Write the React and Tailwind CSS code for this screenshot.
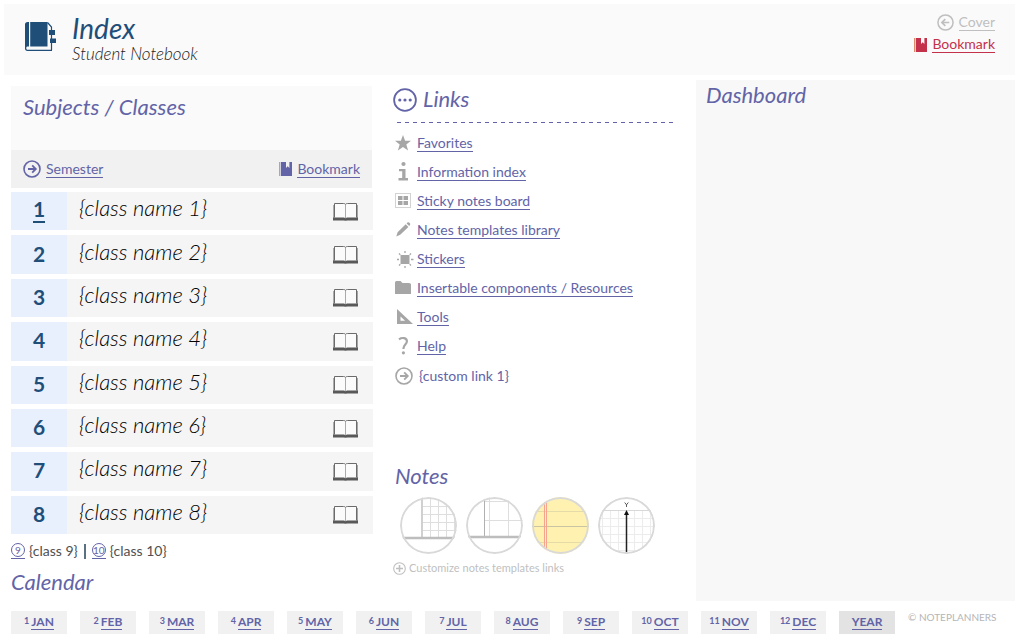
const HAND = "font-['Ink_Free','Lato',sans-serif] italic";

const LINK = "border-b border-current leading-4";

function ArrowCircle({ left = false, className = "" }) {
  return (
    <svg viewBox="0 0 18 18" fill="none" stroke="currentColor" className={className} aria-hidden="true">
      <circle cx="9" cy="9" r="8" strokeWidth="1.6" />
      {left ? (
        <path d="M13 9H5.5M8.8 5.4 5.2 9l3.6 3.6" strokeWidth="1.8" />
      ) : (
        <path d="M5 9h7.5M9.2 5.4 12.8 9l-3.6 3.6" strokeWidth="1.8" />
      )}
    </svg>
  );
}

function BookmarkIcon({ stripe }) {
  return (
    <svg viewBox="0 0 13 14" className="h-[14px] w-[13px]" aria-hidden="true">
      <path d="M0 0h1.4v14H0z" fill={stripe} />
      <path d="M2 0h5v6l1.7-1.700L10.400 6V0H13v14H2z" fill="currentColor" />
    </svg>
  );
}

function NotebookIcon() {
  return (
    <svg viewBox="0 0 32 32" className="h-8 w-8 text-[#1f4e79]" fill="currentColor" aria-hidden="true">
      <path d="M6.200 2H23.500v24.500H6.200z" />
      <path d="M5 2v24.500H3.800c-.9 0-1.500.4-1.500 1.400v.6c0 .9.600 1.300 1.500 1.300H28V31H3.500C1.900 31 1 30 1 28.500V4.500C1 2.900 2 2 3.600 2z" />
      <path d="M23.500 2.500l4 4.500v23" fill="none" stroke="currentColor" strokeWidth="1.200" />
      <path d="M25 10h6v5h-6zM26 18.500h6V23h-6z" />
    </svg>
  );
}

function OpenBook() {
  return (
    <svg viewBox="0 0 25 19" className="h-[19px] w-[25px]" aria-hidden="true">
      <path d="M1.500 15.500V1.500h9c1.200 0 2 .4 2 1.200 0-.8.800-1.200 2-1.200h9v14" fill="#fbfbfb" stroke="#6b6b6b" />
      <path d="M.5 3v13" stroke="#b9a99a" />
      <path d="M24.500 3v13" stroke="#9aa6b9" />
      <path d="M0 15.500h11l1.500.8 1.500-.8h11v3H14.500l-2 .3-2-.3H0z" fill="#595959" />
      <path d="M12.500 2.500V16" stroke="#8fb5b8" />
    </svg>
  );
}

const icons = {
  star: <path d="M8 0l2.100 5.800h5.900l-4.700 3.700 1.800 6L8 12l-5.100 3.500 1.800-6L0 5.800h5.900z" />,
  info: (
    <>
      <circle cx="8.500" cy="0" r="2.100" />
      <path d="M4 5h6.500v9H13v2.500H3.500V14h3.700V7.300H4z" />
    </>
  ),
  board: (
    <>
      <rect x=".5" y=".5" width="15" height="14" fill="none" stroke="currentColor" strokeDasharray="1 1" />
      <path d="M3 3h4.500v4H3zM8.500 3H13v4H8.500zM3 8h4.500v4H3zM8.500 8H13v4H8.500z" />
    </>
  ),
  pencil: <path d="M10.700 2.300l2.700 2.600-8.200 7.900-3.900 1.600 1.300-4.200zM11.600 1.400l.9-.9c1.200-1 3.600 1 2.500 2.600l-.8.900z" />,
  sticker: (
    <>
      <path d="M5.500 4h9v9h-9z" />
      <path d="M10 0v2M10 15v2M2 8.500h2M16 8.500h2.500M4 2.500l1.300 1.300M16 2.500l-1.300 1.300M4 14.500l1.300-1.300M16 14.500l-1.300-1.300" stroke="currentColor" strokeWidth="1.300" />
    </>
  ),
  folder: <path d="M0 2.500Q0 1 1.500 1h4l2 2H14q2 0 2 1.500V14H0z" />,
  tools: <path fillRule="evenodd" d="M2 0l16 15H2zM5.500 7.500v4.300h4.600z" />,
  help: (
    <>
      <path d="M4 1.300C7-.8 12-.4 11.900 3.300 11.800 6.700 8.400 6.600 8.400 11" fill="none" stroke="currentColor" strokeWidth="2.200" />
      <circle cx="8.400" cy="14.800" r="1.600" />
    </>
  ),
};

const links = [
  ["star", "Favorites"],
  ["info", "Information index"],
  ["board", "Sticky notes board"],
  ["pencil", "Notes templates library"],
  ["sticker", "Stickers"],
  ["folder", "Insertable components / Resources"],
  ["tools", "Tools"],
  ["help", "Help"],
];

const templates = [
  {
    name: "Grid paper",
    art: (
      <>
        <path d="M30.500 0v41M38.500 0v41M46.500 0v41M54.500 0v41M23 9.500h34M23 17.500h34M23 25.500h34M23 33.500h34" stroke="#dedede" />
        <path d="M22 0v41" stroke="#d0d0d0" strokeWidth="2" />
        <path d="M0 41h57" stroke="#bdbdbd" strokeWidth="2.500" />
      </>
    ),
  },
  {
    name: "Column paper",
    art: (
      <>
        <path d="M23.500 0v39M42.500 0v39M19 4.500h38M19 23.500h38" stroke="#dedede" />
        <path d="M18.500 0v39" stroke="#b0b0b0" />
        <path d="M0 40h57" stroke="#bdbdbd" strokeWidth="2.500" />
      </>
    ),
  },
  {
    name: "Legal pad",
    art: (
      <>
        <path d="M0 0h57v57H0z" fill="#fff2b0" />
        <path d="M0 14.500h57M0 45.500h57" stroke="#e4dba9" />
        <path d="M0 29.500h57" stroke="#c9c5a2" />
        <path d="M12.500 0v57M14.500 0v57" stroke="#f5a58c" />
      </>
    ),
  },
  {
    name: "Graph axis",
    art: (
      <>
        <path d="M4.500 14v43M12.500 14v43M20.500 14v43M36.500 14v43M44.500 14v43M52.500 14v43M0 21.500h57M0 29.500h57M0 37.500h57M0 45.500h57M0 53.500h57" stroke="#ececec" />
        <path d="M0 13.500h57" stroke="#d8d8d8" />
        <path d="M26.700 5.500l1.800 2.300 1.800-2.300M28.500 7.800V10" stroke="#333" fill="none" strokeWidth=".8" />
        <path d="M28.500 17v40" stroke="#222" strokeWidth="1.500" />
        <path d="M28.500 13l2.500 5h-5z" fill="#111" />
      </>
    ),
  },
];

const months = ["JAN", "FEB", "MAR", "APR", "MAY", "JUN", "JUL", "AUG", "SEP", "OCT", "NOV", "DEC"];
const classes = [1, 2, 3, 4, 5, 6, 7, 8];

function Heading({ children, className = "" }) {
  return <h2 className={`${HAND} text-[22px] leading-[26px] text-[#6264a7] ${className}`}>{children}</h2>;
}

function Header() {
  return (
    <header className="mx-1 mt-1 flex h-[71px] justify-between bg-[#fafafa] px-5">
      <div className="flex gap-4 pt-4">
        <NotebookIcon />
        <div className={HAND}>
          <h1 className="-mt-2 text-[28px] leading-8 text-[#1f4e79]">Index</h1>
          <p className="text-[17px] leading-5 font-light text-[#222]">Student Notebook</p>
        </div>
      </div>
      <nav className="flex flex-col items-end gap-[5px] pt-[10px] text-[14px]">
        <a href="#cover" className="flex items-center gap-[5px] text-[#bfbfbf]">
          <ArrowCircle left className="h-[17px] w-[17px]" />
          <span className={LINK}>Cover</span>
        </a>
        <a href="#bookmark" className="flex items-center gap-[5px] text-[#c4314b]">
          <BookmarkIcon stripe="#e08a6a" />
          <span className={LINK}>Bookmark</span>
        </a>
      </nav>
    </header>
  );
}

function Subjects() {
  return (
    <section>
      <div className="mr-px h-16 bg-[#fafafa] px-3 pt-2">
        <Heading>Subjects / Classes</Heading>
      </div>
      <div className="mr-px flex h-[38px] items-center justify-between bg-[#f1f1f1] px-3 text-[14px] text-[#6264a7]">
        <a href="#semester" className="flex items-center gap-[5px]">
          <ArrowCircle className="h-[18px] w-[18px]" />
          <span className={LINK}>Semester</span>
        </a>
        <a href="#class-bookmark" className="flex items-center gap-[5px]">
          <BookmarkIcon stripe="#a9a3c9" />
          <span className={LINK}>Bookmark</span>
        </a>
      </div>
      <ul className="mt-1 grid min-h-[342px] auto-rows-fr gap-[5px]">
        {classes.map((n) => (
          <li key={n} className="flex items-center bg-[#f5f5f5]">
            <a
              href={`#class-${n}`}
              className="flex w-14 items-center justify-center self-stretch bg-[#e8f0fe] pb-[2px] text-[21px] leading-6 font-bold text-[#1f4e79]"
            >
              <span className={n === 1 ? "border-b-2 border-current" : ""}>{n}</span>
            </a>
            <span className={`${HAND} grow pb-[6px] pl-3 text-[22px] leading-6 font-light text-black`}>{`{class name ${n}}`}</span>
            <a href={`#book-${n}`} aria-label={`Open class ${n}`} className="mr-[15px]">
              <OpenBook />
            </a>
          </li>
        ))}
      </ul>
      <div className="mt-2 flex items-center gap-1 text-[14px] leading-[18px] text-[#505050]">
        <ExtraClass n={9} />
        <span className="mx-[2px] h-[15px] w-[2px] bg-[#5a7184]" />
        <ExtraClass n={10} />
      </div>
      <Heading className="mt-[9px]">Calendar</Heading>
    </section>
  );
}

function ExtraClass({ n }) {
  return (
    <span className="flex items-center gap-1">
      <a href={`#class-${n}`} aria-label={`Class ${n}`} className="border-b border-[#6264a7] pb-px text-[#6264a7]">
        <span className="flex h-[14px] w-[14px] items-center justify-center rounded-full border border-current text-[10px] leading-3">{n}</span>
      </a>
      {`{class ${n}}`}
    </span>
  );
}

function Links() {
  return (
    <section className="px-5">
      <div className="flex items-center gap-[6px] text-[#6264a7]">
        <svg viewBox="0 0 24 24" className="mt-[2px] h-6 w-6" aria-hidden="true">
          <circle cx="12" cy="12" r="10.900" fill="none" stroke="currentColor" strokeWidth="1.800" />
          <circle cx="6.800" cy="12" r="1.600" fill="currentColor" />
          <circle cx="12" cy="12" r="1.600" fill="currentColor" />
          <circle cx="17.200" cy="12" r="1.600" fill="currentColor" />
        </svg>
        <Heading>Links</Heading>
      </div>
      <svg className="mt-[10px] ml-1 h-px w-[278px]" aria-hidden="true">
        <path d="M0 .5h278" stroke="#6264a7" strokeDasharray="4 4" />
      </svg>
      <ul className="mt-[6px] text-[14px] text-[#6264a7]">
        {links.map(([icon, label]) => (
          <li key={label} className="flex h-[29px] items-center">
            <a href={`#${icon}`} className="flex items-center gap-[6px]">
              <svg viewBox="0 0 16 16" className="mb-[2px] ml-[2px] h-4 w-4 overflow-visible text-[#a6a6a6]" fill="currentColor" aria-hidden="true">
                {icons[icon]}
              </svg>
              <span className={LINK}>{label}</span>
            </a>
          </li>
        ))}
        <li className="flex h-[29px] items-center gap-[6px]">
          <ArrowCircle className="ml-[2px] h-[18px] w-[18px] text-[#a6a6a6]" />
          {"{custom link 1}"}
        </li>
      </ul>
      <Heading className="mt-[73px] ml-[2px]">Notes</Heading>
      <div className="mt-2 ml-[7px] flex gap-[9px]">
        {templates.map((t) => (
          <a
            key={t.name}
            href="#template"
            aria-label={t.name}
            className="h-[57px] w-[57px] shrink-0 overflow-hidden rounded-full"
          >
            <svg viewBox="0 0 57 57" className="h-full w-full" aria-hidden="true">
              {t.art}
              <circle cx="28.500" cy="28.500" r="27.500" fill="none" stroke="#d9d9d9" strokeWidth="2" />
            </svg>
          </a>
        ))}
      </div>
      <a href="#customize" className="mt-[6px] flex items-center gap-[3px] text-[11px] leading-4 text-[#bfbfbf]">
        <svg viewBox="0 0 13 13" className="h-[13px] w-[13px]" fill="none" stroke="currentColor" aria-hidden="true">
          <circle cx="6.500" cy="6.500" r="5.800" strokeWidth="1.100" />
          <path d="M6.500 3v7M3 6.500h7" strokeWidth="1.600" />
        </svg>
        Customize notes templates links
      </a>
    </section>
  );
}

export default function App() {
  return (
    <div className="min-h-screen bg-white font-['Lato',sans-serif]">
      <Header />
      <main className="mt-[5px] mr-1 ml-[11px] grid min-h-[521px] grid-cols-[362fr_323fr_319fr]">
        <div className="pt-[6px]">
          <Subjects />
        </div>
        <div className="pt-[6px]">
          <Links />
        </div>
        <section className="bg-[#f8f8f8] px-[10px] pt-[2px]">
          <Heading>Dashboard</Heading>
        </section>
      </main>
      <footer className="mt-[10px] mr-1 ml-[11px] flex gap-[13px] pb-2 text-[12px] text-[#6264a7]">
        {months.map((m, i) => (
          <a
            key={m}
            href={`#${m}`}
            className="flex h-[23px] w-14 items-center justify-center gap-[2px] bg-[#f1f1f1] font-bold"
          >
            <span className="pb-1 text-[9px] leading-3">{i + 1}</span>
            <span className="border-b border-current leading-[14px]">{m}</span>
          </a>
        ))}
        <a href="#year" className="flex h-[23px] w-14 items-center justify-center bg-[#e3e3e3] font-bold">
          <span className="border-b border-current leading-[14px]">YEAR</span>
        </a>
        <span className="text-[10px] leading-3 whitespace-nowrap text-[#b5b5b5]">© NOTEPLANNERS</span>
      </footer>
    </div>
  );
}
